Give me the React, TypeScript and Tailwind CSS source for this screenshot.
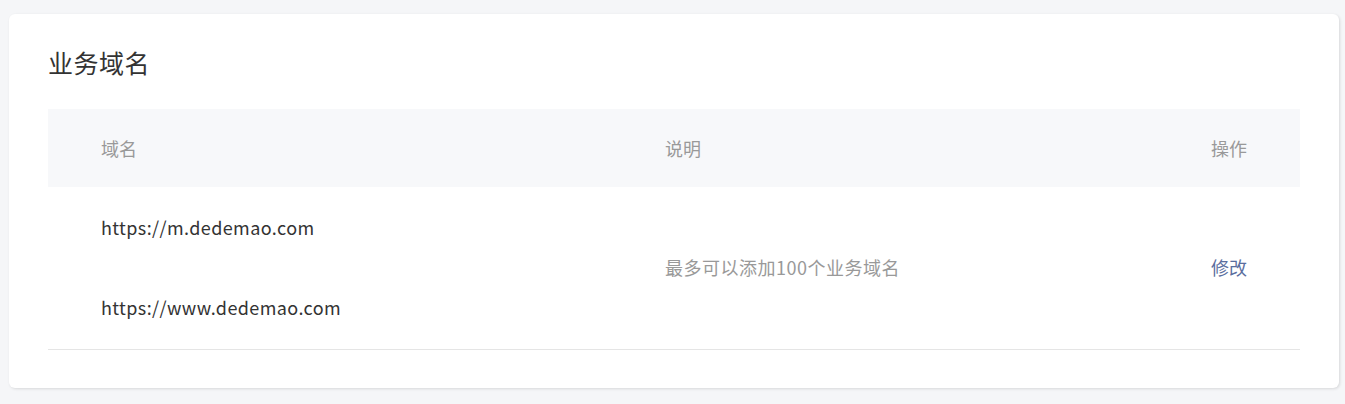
const domains = ['https://m.dedemao.com', 'https://www.dedemao.com'];

export default function App() {
  return (
    <div className="min-h-screen bg-[#f5f6f8] pl-[9px] pt-[14px] font-['Microsoft_YaHei','Noto_Sans_CJK_SC',sans-serif]">
      <div className="w-[1330px] rounded-md bg-white px-[39px] pb-[38px] pt-[30px] shadow-[1px_1px_3px_rgba(0,0,0,0.12)]">
        <h2 className="mb-[29px] text-[25px] leading-[36px] tracking-[0.5px] text-[#333]">业务域名</h2>
        <div className="grid grid-cols-[617px_1fr_auto] items-center bg-[#f7f8fa] h-[78px] text-[18px] text-[#999]">
          <div className="pl-[53px]">域名</div>
          <div>说明</div>
          <div className="pr-[53px]">操作</div>
        </div>
        <div className="grid grid-cols-[617px_1fr_auto] items-center border-b border-[#e5e5e5] pb-[2px] text-[18px]">
          <div className="pl-[53px] text-[#333] tracking-[0.4px]">
            {domains.map((d) => (
              <div key={d} className="flex h-[80px] items-center">{d}</div>
            ))}
          </div>
          <div className="text-[#999] tracking-[0.5px]">最多可以添加100个业务域名</div>
          <div className="pr-[53px]">
            <a className="cursor-pointer text-[#5a6e9e]">修改</a>
          </div>
        </div>
      </div>
    </div>
  );
}
